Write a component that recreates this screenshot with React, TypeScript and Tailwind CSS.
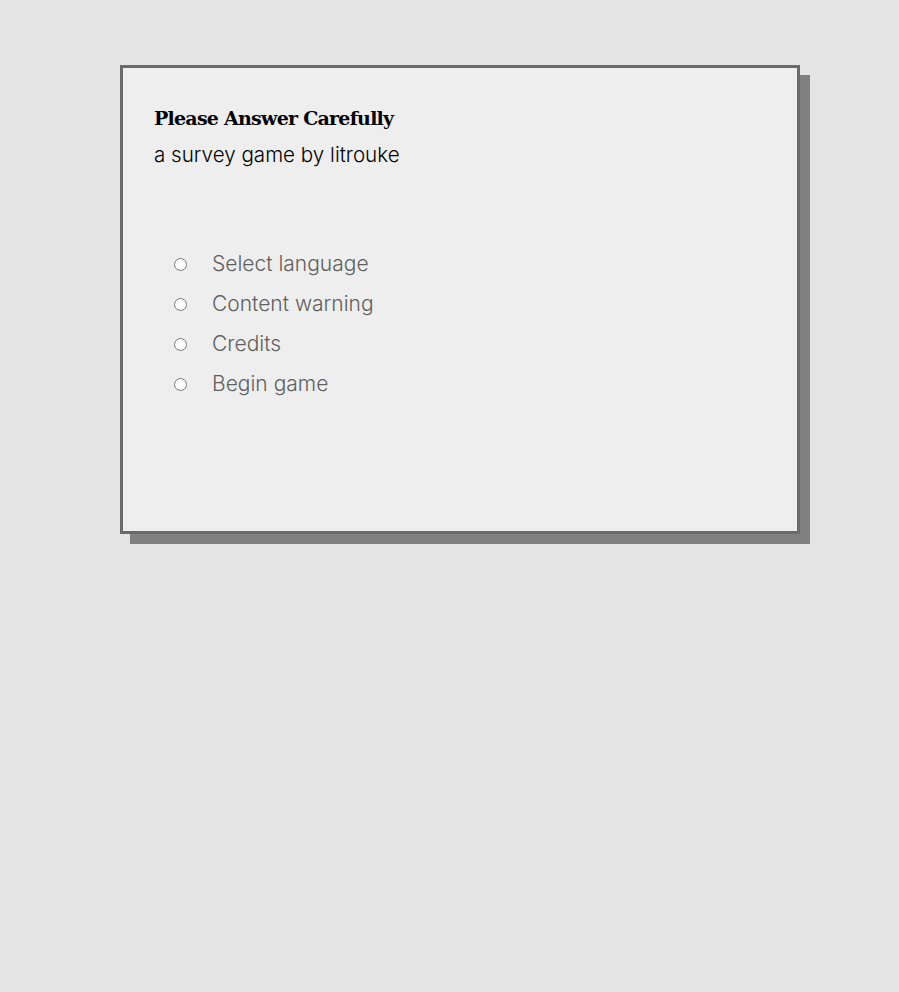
const items = ['Select language', 'Content warning', 'Credits', 'Begin game'];

const App = () => {
  return (
    <div className="min-h-[992px] w-full bg-[#e4e4e4] pt-[65px] pl-[120px]">
      <div className="h-[469px] w-[680px] border-[3px] border-[#6a6a6a] bg-[#eeeeee] px-[31px] pt-[36px] shadow-[10px_10px_0_0_#808080]">
        <h1 className="font-['DejaVu_Serif',serif] text-[19px] font-bold leading-[28px] text-black tracking-[-0.75px]">
          Please Answer Carefully
        </h1>
        <p className="mt-[9px] font-['Inter',sans-serif] text-[20.6px] font-light leading-[28px] text-black">
          a survey game by litrouke
        </p>
        <ul className="mt-[81px] flex flex-col gap-[12px] pl-[20px]">
          {items.map((x) => (
            <li key={x} className="flex h-[28px] items-center">
              <input type="radio" name="menu" className="m-0 h-[13px] w-[13px]" />
              <span className="ml-[25px] font-['Inter',sans-serif] text-[21px] font-light text-[#5f5f5f]">{x}</span>
            </li>
          ))}
        </ul>
      </div>
    </div>
  );
};

export default App;
